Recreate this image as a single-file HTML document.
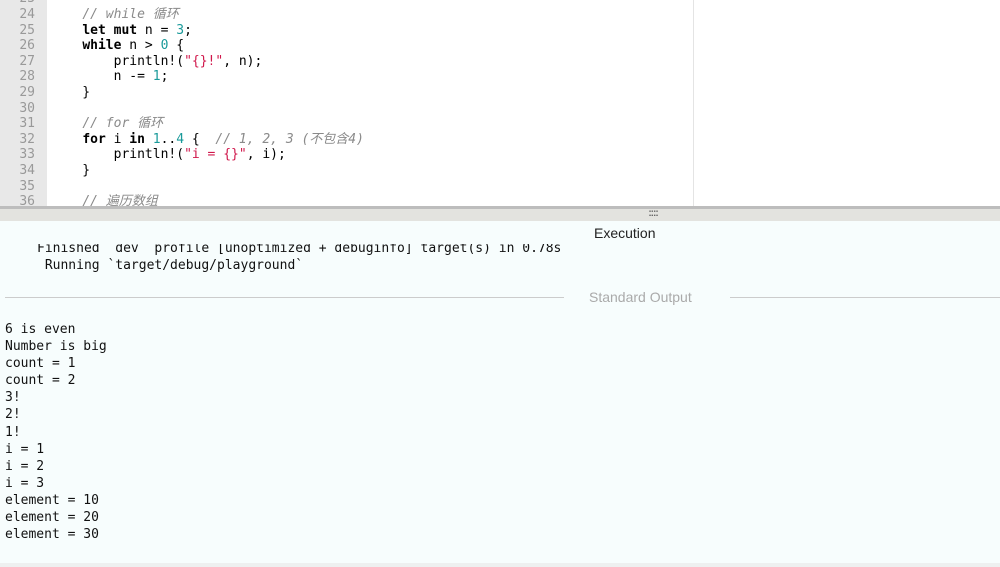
<!DOCTYPE html>
<html><head><meta charset="utf-8"><style>
*{margin:0;padding:0;box-sizing:border-box}
body{width:1000px;height:567px;overflow:hidden;background:#f7fdfd;position:relative;font-family:"DejaVu Sans Mono","Liberation Mono","Noto Sans CJK SC",monospace}
.top{position:absolute;left:0;top:0;width:1000px;height:206px;background:#fff;overflow:hidden}
.gut{position:absolute;left:0;top:0;width:47px;height:206px;background:#e8e8e8}
.vl{position:absolute;left:693px;top:0;width:1px;height:206px;background:#e4e4e4}
.code{position:absolute;left:0;top:-8.6px;font-size:13px;line-height:15.6px;white-space:pre;color:#000}
.ln{display:inline-block;width:35px;text-align:right;color:#999;margin-right:16px}
.k{font-weight:bold}.n{color:#1a9a9a}.s{color:#d0174b}.c{color:#8a8a8a;font-style:italic}
.div1{position:absolute;left:0;top:206px;width:1000px;height:3px;background:#bdbdbd}
.div2{position:absolute;left:0;top:209px;width:1000px;height:12px;background:#e3e3df;font-size:10px;font-weight:bold;color:#666;text-align:center;line-height:10px;letter-spacing:-1px;font-family:"Liberation Sans",sans-serif;padding-left:306px}
.exec{position:absolute;left:594px;top:225px;font:14px "Liberation Sans",sans-serif;color:#222}
.clip{position:absolute;left:0;top:244px;width:1000px;height:40px;overflow:hidden}
.fin{position:absolute;left:37px;top:-4px;font-size:13px;line-height:17px;white-space:pre;color:#111}
.sol{position:absolute;top:297px;height:1px;background:#ccc}
.so{position:absolute;left:589px;top:289px;font:14px "Liberation Sans",sans-serif;color:#aaa}
.out{position:absolute;left:5px;top:321px;font-size:13px;line-height:17.1px;white-space:pre;color:#111}
.bot{position:absolute;left:0;top:563px;width:1000px;height:4px;background:#eef0f0}
</style></head><body>
<div class="top"><div class="gut"></div><div class="vl"></div>
<div class="code"><span class="ln">23</span>
<span class="ln">24</span>    <span class="c">// while 循环</span>
<span class="ln">25</span>    <span class="k">let mut</span> n = <span class="n">3</span>;
<span class="ln">26</span>    <span class="k">while</span> n &gt; <span class="n">0</span> {
<span class="ln">27</span>        println!(<span class="s">"{}!"</span>, n);
<span class="ln">28</span>        n -= <span class="n">1</span>;
<span class="ln">29</span>    }
<span class="ln">30</span>
<span class="ln">31</span>    <span class="c">// for 循环</span>
<span class="ln">32</span>    <span class="k">for</span> i <span class="k">in</span> <span class="n">1</span>..<span class="n">4</span> {  <span class="c">// 1, 2, 3 (不包含4)</span>
<span class="ln">33</span>        println!(<span class="s">"i = {}"</span>, i);
<span class="ln">34</span>    }
<span class="ln">35</span>
<span class="ln">36</span>    <span class="c">// 遍历数组</span></div>
</div>
<div class="div1"></div><div class="div2">::::</div>
<div class="exec">Execution</div>
<div class="clip"><div class="fin">Finished `dev` profile [unoptimized + debuginfo] target(s) in 0.78s
 Running `target/debug/playground`</div></div>
<div class="sol" style="left:5px;width:559px"></div>
<div class="so">Standard Output</div>
<div class="sol" style="left:730px;width:270px"></div>
<div class="out">6 is even
Number is big
count = 1
count = 2
3!
2!
1!
i = 1
i = 2
i = 3
element = 10
element = 20
element = 30</div>
<div class="bot"></div>
</body></html>
